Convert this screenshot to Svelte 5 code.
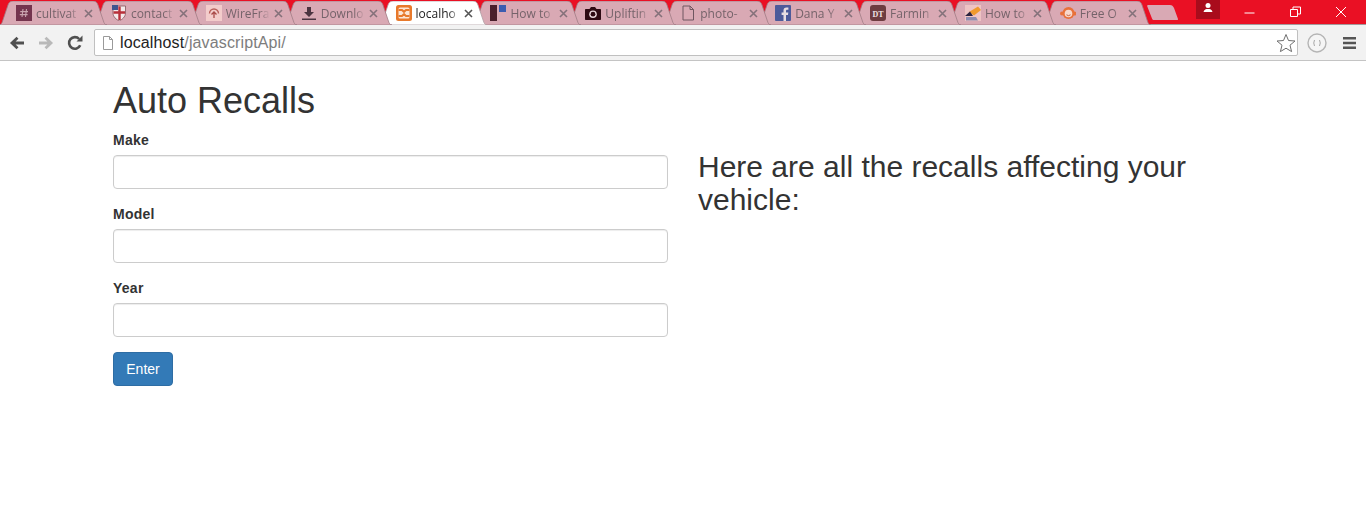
<script lang="ts">
	interface Tab {
		title: string;
		icon: string;
		active?: boolean;
	}

	const tabs: Tab[] = [
		{ title: 'cultivat', icon: 'hash' },
		{ title: 'contact', icon: 'shield' },
		{ title: 'WireFra', icon: 'wire' },
		{ title: 'Downlo', icon: 'download' },
		{ title: 'localho', icon: 'xampp', active: true },
		{ title: 'How to', icon: 'trello' },
		{ title: 'Upliftin', icon: 'camera' },
		{ title: 'photo-', icon: 'doc' },
		{ title: 'Dana Y', icon: 'fb' },
		{ title: 'Farmin', icon: 'dt' },
		{ title: 'How to', icon: 'wiki' },
		{ title: 'Free O', icon: 'monkey' }
	];

	const fields = ['Make', 'Model', 'Year'];
</script>

<div class="chrome">
	<div class="tabstrip">
		{#each tabs as tab, i}
			<div class="tab" class:active={tab.active} style:z-index={tabs.length - i}>
				<svg class="tab-shape" viewBox="0 0 108 24" preserveAspectRatio="none">
					<path d="M0 24 C2 24 3 22 3.6 20 L9 4 C9.6 2 11 0 14 0 L94 0 C97 0 98.4 2 99 4 L104.4 20 C105 22 106 24 108 24 Z" />
				</svg>
				<svg class="favicon" viewBox="0 0 16 16">
					{#if tab.icon === 'hash'}
						<rect width="16" height="16" fill="#74344e" />
						<path d="M7 4 L6 12 M10.5 4 L9.5 12 M4.2 6.6 H12 M3.8 9.6 H11.6" stroke="#c9a3ae" stroke-width="1.1" fill="none" />
					{:else if tab.icon === 'shield'}
						<path d="M2 1 H14.5 V8 C14.5 12 11 14.5 8.2 16 C5.4 14.5 2 12 2 8 Z" fill="#f4e9ea" stroke="#84525a" stroke-width="0.8" />
						<path d="M8.5 1.5 V15 M2.5 7.5 H14" stroke="#b8303a" stroke-width="2.4" />
						<rect x="1" y="0" width="6" height="5" fill="#3e5590" />
					{:else if tab.icon === 'wire'}
						<rect width="16" height="16" fill="#f3cccb" />
						<path d="M3.5 8.5 A4.5 4.5 0 0 1 12.5 8.5" fill="none" stroke="#b8605c" stroke-width="1.4" />
						<path d="M8 7 V13 M5.5 9.5 L8 7 L10.5 9.5" fill="none" stroke="#a84a48" stroke-width="1.3" />
					{:else if tab.icon === 'download'}
						<path d="M6 2 H10 V7 H13 L8 12 L3 7 H6 Z" fill="#4c3440" />
						<rect x="1" y="13.5" width="14" height="1.5" fill="#4c3440" />
					{:else if tab.icon === 'xampp'}
						<rect width="16" height="16" rx="2.5" fill="#e8792b" />
						<rect x="2.5" y="2.5" width="11" height="11" rx="1.5" fill="#fbe6d6" />
						<path d="M2.5 5 H6 L8 6.8 L10 5 H13.5 M2.5 11 H6 L8 9.2 L10 11 H13.5" fill="none" stroke="#e8792b" stroke-width="2" />
					{:else if tab.icon === 'trello'}
						<rect width="7" height="16" fill="#4a1f2b" />
						<rect x="9" y="0" width="7" height="7" fill="#3a5cb0" />
					{:else if tab.icon === 'camera'}
						<path d="M1 4 H4.5 L6 2 H10 L11.5 4 H15 C15.6 4 16 4.4 16 5 V14 C16 14.6 15.6 15 15 15 H1 C0.4 15 0 14.6 0 14 V5 C0 4.4 0.4 4 1 4 Z" fill="#2d0a12" />
						<circle cx="8" cy="9.2" r="3.8" fill="#e6d5d8" />
						<circle cx="8" cy="9.2" r="2.4" fill="#2d0a12" />
					{:else if tab.icon === 'doc'}
						<path d="M3 1 H10 L13.5 4.5 V15 H3 Z M10 1 V4.5 H13.5" fill="none" stroke="#6f5660" />
					{:else if tab.icon === 'fb'}
						<rect width="16" height="16" rx="1" fill="#4d5a9a" />
						<path d="M11 16 V10 H13 L13.3 7.5 H11 V6 C11 5.2 11.4 4.8 12.2 4.8 H13.4 V2.6 H11.5 C9.6 2.6 8.5 3.8 8.5 5.6 V7.5 H6.6 V10 H8.5 V16 Z" fill="#e8dde2" />
					{:else if tab.icon === 'dt'}
						<rect width="16" height="16" rx="3" fill="#6d3c40" />
						<text x="8" y="11.5" class="dt">DT</text>
					{:else if tab.icon === 'wiki'}
						<rect width="16" height="16" fill="#eec4c4" />
						<path d="M4 7 L13 1.5 L16 5 L9 10.5 Z" fill="#ef9a2e" />
						<path d="M0 11 L5 6.5 L8 11 Z" fill="#2d2440" />
						<path d="M1 12 H11 L13 15.5 H1 Z" fill="#8d8cb0" />
					{:else}
						<circle cx="2" cy="8.5" r="2" fill="#e8713a" />
						<circle cx="14.5" cy="8.5" r="2" fill="#e8713a" />
						<circle cx="8.5" cy="8" r="6" fill="#e8713a" />
						<circle cx="8.5" cy="8.5" r="3.8" fill="#f8d8cc" />
						<path d="M6.5 9.8 Q8.5 11.5 10.5 9.8" fill="none" stroke="#c8603c" />
					{/if}
				</svg>
				<span class="tab-title">{tab.title}</span>
				<svg class="tab-close" viewBox="0 0 9 9">
					<path d="M1 1 L8 8 M8 1 L1 8" />
				</svg>
			</div>
		{/each}
		<svg class="new-tab" viewBox="0 0 32 15">
			<path d="M1 0 H23 C25 0 26 1 27 3 L31 14 C31 14.5 31 15 30 15 H7 C6 15 5.5 14.5 5 13.5 L0.5 2 C0 1 0 0 1 0 Z" />
		</svg>
		<div class="window-controls">
			<div class="profile">
				<svg viewBox="0 0 12 12" width="12" height="12">
					<circle cx="6" cy="3.5" r="2.5" fill="#fff" />
					<path d="M1.5 10 C2 7.5 4 7 6 7 C8 7 10 7.5 10.5 10 Z" fill="#fff" />
				</svg>
			</div>
			<button class="win" aria-label="Minimize">
				<svg viewBox="0 0 12 12" width="12" height="12"><path d="M0.5 7 H10.5" /></svg>
			</button>
			<button class="win" aria-label="Restore">
				<svg viewBox="0 0 12 12" width="12" height="12"><path d="M0.5 3.5 H7.5 V10.5 H0.5 Z M3 3.5 V1 H10.5 V8 H7.5" /></svg>
			</button>
			<button class="win" aria-label="Close">
				<svg viewBox="0 0 12 12" width="12" height="12"><path d="M1 1 L11 11 M11 1 L1 11" /></svg>
			</button>
		</div>
	</div>

	<div class="toolbar">
		<svg class="nav" viewBox="0 0 16 16" width="16" height="16">
			<path d="M15 8 H4 M8.5 2.8 L3 8 L8.5 13.2" fill="none" stroke="#505050" stroke-width="2.8" />
		</svg>
		<svg class="nav" viewBox="0 0 16 16" width="16" height="16">
			<path d="M1 8 H12 M7.5 2.8 L13 8 L7.5 13.2" fill="none" stroke="#b9b9b9" stroke-width="2.8" />
		</svg>
		<svg class="nav" viewBox="0 0 16 16" width="16" height="16">
			<path d="M13.2 10.2 A5.8 5.8 0 1 1 12.2 4" fill="none" stroke="#505050" stroke-width="2.6" />
			<path d="M9.5 6.5 H15.5 V0.5 Z" fill="#505050" />
		</svg>
		<div class="omnibox">
			<svg viewBox="0 0 12 14" width="12" height="14">
				<path d="M1.5 0.5 H7.5 L10.5 3.5 V13.5 H1.5 Z M7.5 0.5 V3.5 H10.5" fill="#fff" stroke="#9a9a9a" />
			</svg>
			<span class="url"><span class="host">localhost</span>/javascriptApi/</span>
			<svg class="star" viewBox="0 0 20 20" width="20" height="20">
				<path d="M10 1.5 L12.5 7.5 L19 8 L14 12.2 L15.6 18.6 L10 15.2 L4.4 18.6 L6 12.2 L1 8 L7.5 7.5 Z" fill="#fff" stroke="#6e6e6e" />
			</svg>
		</div>
		<svg class="ext" viewBox="0 0 20 20" width="20" height="20">
			<circle cx="10" cy="10" r="9" fill="#f5f5f5" stroke="#b5b5b5" stroke-width="1.4" />
			<path d="M7.5 7 Q6 10 7.5 13 M12.5 7 Q14 10 12.5 13" fill="none" stroke="#a8a8a8" />
		</svg>
		<svg class="menu" viewBox="0 0 13 12" width="13" height="12">
			<path d="M0 0 H13 V2.5 H0 Z M0 4.7 H13 V7.2 H0 Z M0 9.4 H13 V12 H0 Z" fill="#555" />
		</svg>
	</div>
</div>

<main class="container">
	<section class="col">
		<h1>Auto Recalls</h1>
		<form onsubmit={(e) => e.preventDefault()}>
			{#each fields as field}
				<div class="form-group">
					<label for={field}>{field}</label>
					<input id={field} type="text" />
				</div>
			{/each}
			<button class="btn" type="submit">Enter</button>
		</form>
	</section>
	<section class="col">
		<h2>Here are all the recalls affecting your vehicle:</h2>
	</section>
</main>

<style>
	:global(body) {
		background: #fff;
		color: #333;
		font-family: 'Liberation Sans', Arial, sans-serif;
		font-size: 14px;
		overflow: hidden;
	}

	.chrome {
		height: 61px;
		box-sizing: border-box;
		background: #f2f2f2;
		border-bottom: 1px solid #c4c4c4;
	}

	.tabstrip {
		position: relative;
		z-index: 1;
		display: flex;
		align-items: flex-end;
		height: 25px;
		box-sizing: border-box;
		padding-left: 3.5px;
		background: #ea1024;
		border-bottom: 1px solid #a49a9c;
	}

	.tab {
		position: relative;
		display: flex;
		align-items: center;
		flex: 0 0 94.9px;
		min-width: 0;
		box-sizing: border-box;
		height: 23px;
		padding: 1px 5px 0 12.5px;
		font-family: 'Open Sans', 'Liberation Sans', sans-serif;
		font-size: 12px;
		color: #75636a;
	}

	.tab.active {
		color: #222;
	}

	.tab-shape {
		position: absolute;
		left: -4.5px;
		top: 0;
		width: 108px;
		height: 24px;
		fill: #d9a9b4;
		stroke: #a07c85;
		stroke-width: 0.8;
	}

	.tab.active .tab-shape {
		fill: #fff;
		stroke: #b0a0a4;
	}

	.favicon {
		position: relative;
		flex: none;
		width: 16px;
		height: 16px;
		margin-right: 4px;
	}

	.dt {
		font-family: 'Liberation Serif', serif;
		font-size: 8px;
		font-weight: bold;
		fill: #f0e4e4;
		text-anchor: middle;
	}

	.tab-title {
		position: relative;
		flex: 1;
		min-width: 0;
		overflow: hidden;
		white-space: nowrap;
		-webkit-mask-image: linear-gradient(to right, #000 75%, transparent);
		mask-image: linear-gradient(to right, #000 75%, transparent);
	}

	.tab-close {
		position: relative;
		flex: none;
		width: 9px;
		height: 9px;
		margin-left: 4px;
		fill: none;
		stroke: #84717a;
		stroke-width: 1.6;
	}

	.tab.active .tab-close {
		stroke: #555;
	}

	.new-tab {
		flex: none;
		align-self: flex-start;
		width: 32px;
		height: 15px;
		margin: 5px 0 0 5px;
		fill: #d9a9b4;
	}

	.window-controls {
		display: flex;
		align-self: flex-start;
		margin-left: auto;
		height: 24px;
		padding-right: 2.25px;
	}

	.profile {
		display: flex;
		justify-content: center;
		align-items: flex-start;
		width: 24px;
		height: 19px;
		margin-right: 7.25px;
		padding-top: 2px;
		box-sizing: border-box;
		background: #a90c1c;
	}

	.win {
		display: flex;
		align-items: center;
		justify-content: center;
		width: 45.5px;
		height: 24px;
		padding: 0;
		border: none;
		background: transparent;
	}

	.win svg {
		fill: none;
		stroke: #fff;
		stroke-width: 1;
	}

	.toolbar {
		display: flex;
		align-items: center;
		height: 35px;
		padding: 0 10px 0 9px;
	}

	.nav {
		flex: none;
		margin-right: 13px;
	}

	.omnibox {
		flex: 1;
		display: flex;
		align-items: center;
		height: 27px;
		box-sizing: border-box;
		margin: 0 9px 0 -2px;
		padding: 0 1px 0 7px;
		background: #fff;
		border: 1px solid #c0c0c0;
		border-radius: 2px;
	}

	.url {
		flex: 1;
		margin-left: 6px;
		font-size: 16px;
		letter-spacing: 0.13px;
		color: #7d7d7d;
	}

	.host {
		color: #222;
	}

	.ext {
		flex: none;
		margin-right: 16px;
	}

	.menu {
		flex: none;
	}

	.container {
		display: flex;
		width: 1170px;
		margin: 0 auto;
	}

	.col {
		box-sizing: border-box;
		width: 585px;
		padding: 0 15px;
	}

	h1 {
		margin: 20px 0 9.5px;
		font-size: 36px;
		font-weight: 500;
		line-height: 1.1;
	}

	h2 {
		margin: 89px 0 10px;
		font-size: 30px;
		font-weight: 500;
		line-height: 1.1;
	}

	.form-group {
		margin-bottom: 15px;
	}

	label {
		display: block;
		margin-bottom: 5px;
		font-weight: 700;
		line-height: 20px;
		letter-spacing: 0.25px;
	}

	input {
		display: block;
		width: 100%;
		height: 34px;
		box-sizing: border-box;
		padding: 6px 12px;
		background: #fff;
		border: 1px solid #ccc;
		border-radius: 4px;
		box-shadow: inset 0 1px 1px rgba(0, 0, 0, 0.075);
	}

	.btn {
		display: block;
		width: 60px;
		height: 34px;
		padding: 6px 0;
		font-family: inherit;
		font-size: 14px;
		line-height: 20px;
		color: #fff;
		background: #337ab7;
		border: 1px solid #2e6da4;
		border-radius: 4px;
	}
</style>
